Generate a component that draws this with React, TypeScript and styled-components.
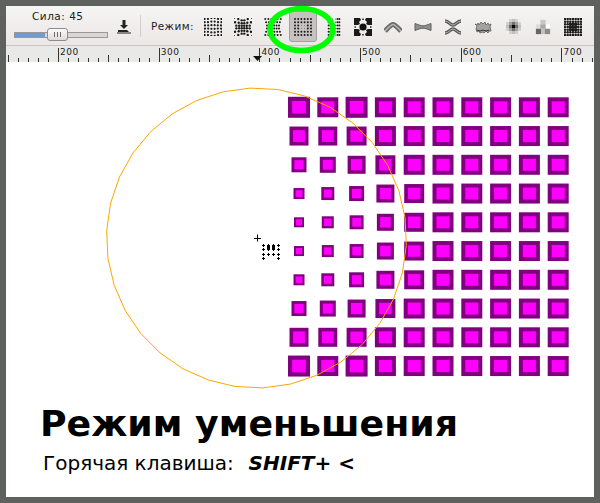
import React from 'react'
import styled, { createGlobalStyle } from 'styled-components'

const GlobalStyle = createGlobalStyle`
  html, body {
    margin: 0;
    padding: 0;
    background: #5f615e;
  }
`

const Frame = styled.div`
  position: relative;
  box-sizing: border-box;
  width: 600px;
  height: 503px;
  padding: 6px;
  background: #5f615e;
  overflow: hidden;
  font-family: 'DejaVu Sans', sans-serif;
`

const Toolbar = styled.div`
  display: flex;
  align-items: center;
  box-sizing: border-box;
  height: 40px;
  padding-left: 8px;
  background: linear-gradient(#f5f5f3, #ebe7e5);
  border-bottom: 1px solid #c9c3c2;
`

const SliderBlock = styled.div`
  display: flex;
  flex-direction: column;
  align-items: flex-start;
  width: 94px;
  gap: 10px;
  padding-bottom: 3px;
`

const SliderLabel = styled.span`
  margin-left: 18px;
  font-size: 10.5px;
  line-height: 12px;
  letter-spacing: 0.5px;
  color: #222;
`

const Track = styled.div`
  position: relative;
  box-sizing: border-box;
  width: 94px;
  height: 6px;
  background: #dcd6d5;
  border: 1px solid #9a9896;
`

const TrackFill = styled.div`
  height: 100%;
  background: #6b9cd6;
`

const Thumb = styled.div`
  position: absolute;
  top: -5px;
  box-sizing: border-box;
  display: flex;
  align-items: center;
  justify-content: center;
  gap: 2px;
  width: 21px;
  height: 13px;
  background: linear-gradient(#fbfbfa, #dedbd9);
  border: 1px solid #8f8d8b;
  border-radius: 3px;
`

const Grip = styled.i`
  width: 1px;
  height: 5px;
  background: #6e6c6a;
`

const SaveButton = styled.div`
  display: flex;
  justify-content: center;
  width: 32px;
  padding-top: 2px;
`

const Separator = styled.div`
  width: 1px;
  height: 22px;
  background: #d2d0ce;
`

const ModeLabel = styled.span`
  margin-left: 10px;
  width: 47px;
  font-size: 10.5px;
  letter-spacing: 0.4px;
  color: #222;
`

const ModeRow = styled.div`
  display: flex;
  align-items: center;
`

const ModeButton = styled.div<{ $active?: boolean }>`
  box-sizing: border-box;
  display: flex;
  align-items: center;
  justify-content: center;
  width: 28px;
  height: 31px;
  margin: 0 1px;
  border-radius: 3px;
  background: ${p => (p.$active ? '#c6c2c0' : 'transparent')};
  border: 1px solid ${p => (p.$active ? '#a3a19f' : 'transparent')};
  transform: translateY(1px);
`

const Highlight = styled.svg`
  position: absolute;
  left: 262px;
  top: 0;
  width: 80px;
  height: 60px;
`

const RulerBar = styled.svg`
  display: block;
  width: 588px;
  height: 16px;
  background: #e9e9e7;
`

const Canvas = styled.div`
  display: flex;
  flex-direction: column;
  height: 435px;
  background: #fff;
`

const Drawing = styled.svg`
  display: block;
  width: 588px;
  height: 340px;
`

const Caption = styled.div`
  display: flex;
  flex-direction: column;
  padding-left: 34px;
`

const Title = styled.div`
  font-size: 36.3px;
  line-height: 44px;
  font-weight: 700;
  color: #000;
`

const Hotkey = styled.div`
  margin: 5px 0 0 3px;
  font-size: 20px;
  line-height: 24px;
  color: #000;
  white-space: pre;
`

const Key = styled.b`
  margin-left: 2px;
  font-style: italic;
`

type Dot = [number, number, number?]

const range = (n: number) => Array.from({ length: n }, (_, i) => i)

function gridDots(n: number, move: (x: number, y: number) => Dot): Dot[] {
  const out: Dot[] = []
  const step = 16 / (n - 1)
  range(n).forEach(r =>
    range(n).forEach(c => {
      out.push(move(1 + c * step - 9, 1 + r * step - 9))
    })
  )
  return out
}

const DOT_ICONS: Record<string, Dot[]> = {
  scatter: gridDots(6, (x, y) => [
    x + 9 + (Math.abs(y) < 2 ? 0 : x * 0.05),
    y + 9 + (Math.abs(x) < 3 ? y * 0.12 : 0),
    1.1,
  ]),
  pinch: gridDots(6, (x, y) => {
    const k = 0.75 + Math.abs(x * y) / 160
    return [x * k + 9, y * k + 9, 1.2]
  }),
  left: gridDots(6, (x, y) => [
    x * (0.7 + Math.abs(y) / 30) + 9,
    y + 9,
    1,
  ]),
  shrink: gridDots(6, (x, y) => {
    const inner = Math.abs(x) < 4 && Math.abs(y) < 4
    return [x + 9, y + 9, inner ? 0.4 : 1]
  }),
  columns: gridDots(6, (x, y) => [
    x * 0.55 + 9 + (x > 0 ? 2 : 0),
    y + 9,
    x > -2 && x < 2 ? 0.6 : 0.95,
  ]),
  dense: gridDots(7, (x, y) => [
    x + 9,
    y + 9,
    1.25 + (Math.abs(x) < 4 && Math.abs(y) < 4 ? 0.5 : 0),
  ]),
}

function DotIcon({ name }: { name: string }) {
  return (
    <svg width="18" height="18" viewBox="0 0 18 18">
      {DOT_ICONS[name].map(([x, y, r], i) => (
        <circle key={i} cx={x} cy={y} r={r} fill="#1c1c1c" />
      ))}
    </svg>
  )
}

function BlobIcon() {
  return (
    <svg width="18" height="18" viewBox="0 0 18 18">
      <circle cx="9" cy="9" r="3.6" fill="#111" />
      <path d="M0 0h6l1 2-2 2 1 2-2 1H0zM18 0h-6l-1 2 2 2-1 2 2 1h4zM0 18h6l1-2-2-2 1-2-2-1H0zM18 18h-6l-1-2 2-2-1-2 2-1h4z" fill="#1a1a1a" />
      <path d="M8 0.500h2v1.500H8zM8 16h2v1.500H8zM0.500 8H2v2H0.500zM16 8h1.500v2H16z" fill="#555" />
    </svg>
  )
}

function ArchIcon() {
  return (
    <svg width="18" height="18" viewBox="0 0 18 18">
      <path d="M1 13 C5 9 7 6.5 9 6.5 C11 6.5 13 9 17 13" fill="none" stroke="#6c6c6c" strokeWidth="5" />
      <path d="M1 13 C5 9 7 6.5 9 6.5 C11 6.5 13 9 17 13" fill="none" stroke="#b4b4b2" strokeWidth="1.6" />
    </svg>
  )
}

function BowIcon() {
  return (
    <svg width="18" height="18" viewBox="0 0 18 18">
      <path d="M1 5.500 C5 7 7 7.800 9 7.800 C11 7.800 13 7 17 5.500 V12.500 C13 11 11 10.200 9 10.200 C7 10.200 5 11 1 12.500 Z" fill="#8e8e8c" stroke="#5e5e5e" strokeWidth="1" />
    </svg>
  )
}

function CrossIcon() {
  return (
    <svg width="18" height="18" viewBox="0 0 18 18">
      <path d="M1 3 C5 3 6 7 9 7 C12 7 13 3 17 3" fill="none" stroke="#5c5c5c" strokeWidth="3.4" />
      <path d="M1 15 C5 15 6 11 9 11 C12 11 13 15 17 15" fill="none" stroke="#5c5c5c" strokeWidth="3.4" />
      <path d="M1 3 C5 3 6 7 9 7 C12 7 13 3 17 3M1 15 C5 15 6 11 9 11 C12 11 13 15 17 15" fill="none" stroke="#b0b0ae" strokeWidth="1" />
    </svg>
  )
}

function RoughIcon() {
  return (
    <svg width="18" height="18" viewBox="0 0 18 18">
      <path d="M1 6l2 1 1-2 1 2 2-3 2 2 2-2 1 3 2-2 1 2 2-1-1 3 1 4-2 0-1 2-2-2-2 2-2-1-2 1-1-2-2 1-1-3 1-3z" fill="#a2a2a0" stroke="#5a5a5a" strokeWidth="0.8" />
      <path d="M3 12l3 1 3-1 3 1 3-1" fill="none" stroke="#333" strokeWidth="1" />
    </svg>
  )
}

const BLUR_SHADES = [
  ['#efefee', '#d0d0ce', '#c0c0be', '#d0d0ce', '#efefee'],
  ['#d0d0ce', '#a2a2a0', '#707070', '#a2a2a0', '#d0d0ce'],
  ['#c0c0be', '#707070', '#0a0a0a', '#707070', '#c0c0be'],
  ['#d0d0ce', '#a2a2a0', '#707070', '#a2a2a0', '#d0d0ce'],
  ['#efefee', '#d0d0ce', '#c0c0be', '#d0d0ce', '#efefee'],
]

function BlurIcon() {
  return (
    <svg width="15" height="15" viewBox="0 0 15 15">
      {BLUR_SHADES.map((row, r) =>
        row.map((fill, c) => (
          <rect key={`${r}-${c}`} x={c * 3} y={r * 3} width="3" height="3" fill={fill} />
        ))
      )}
    </svg>
  )
}

function PixelIcon() {
  return (
    <svg width="16" height="16" viewBox="0 0 18 18">
      <rect x="6" y="1" width="6" height="5" fill="#c8c8c6" />
      <rect x="12" y="6" width="5" height="5" fill="#fff" />
      <rect x="1" y="6" width="5" height="5" fill="#dcdcda" />
      <rect x="6" y="6" width="6" height="5" fill="#a8a8a6" />
      <rect x="1" y="11" width="6" height="6" fill="#666" />
      <rect x="7" y="11" width="4" height="6" fill="#c0c0be" />
      <rect x="11" y="11" width="6" height="6" fill="#8c8c8a" />
    </svg>
  )
}

const MODES: React.ReactNode[] = [
  <DotIcon name="scatter" />,
  <DotIcon name="pinch" />,
  <DotIcon name="left" />,
  <DotIcon name="shrink" />,
  <DotIcon name="columns" />,
  <BlobIcon />,
  <ArchIcon />,
  <BowIcon />,
  <CrossIcon />,
  <RoughIcon />,
  <BlurIcon />,
  <PixelIcon />,
  <DotIcon name="dense" />,
]

// x offset inside the ruler, tick every 10.07px with the label on each hundred
function Ruler() {
  const ticks = range(59).map(i => {
    const x = 2.1 + i * 10.07 - 0.5
    const major = (i - 5) % 10 === 0
    const mid = (i - 5) % 5 === 0
    return { x: Math.round(x) + 0.5, major, mid }
  })
  return (
    <RulerBar viewBox="0 0 588 16">
      {ticks.map((t, i) => (
        <line
          key={i}
          x1={t.x}
          x2={t.x}
          y1={t.major ? 2 : t.mid ? 9 : 12}
          y2="16"
          stroke="#333"
          strokeWidth="1"
        />
      ))}
      {[200, 300, 400, 500, 600, 700].map((n, i) => (
        <text
          key={n}
          x={54 + i * 100.7}
          y="9"
          fontSize="9"
          letterSpacing="0.5"
          fill="#222"
          fontFamily="'DejaVu Sans', sans-serif"
        >
          {n}
        </text>
      ))}
      <path d="M247 10h9l-4.500 5z" fill="#111" />
    </RulerBar>
  )
}

// outer size of each square for the five left columns, upper half of the grid
const SIZES = [
  [22, 21, 22, 21, 21],
  [19, 19, 20, 21, 21],
  [15, 16, 18, 20, 21],
  [11, 13, 15, 18, 20],
  [10, 12, 14, 17, 20],
]

function Squares() {
  const rects: React.ReactNode[] = []
  range(10).forEach(r => {
    range(10).forEach(c => {
      const row = r < 5 ? r : 9 - r
      const w = c < 5 ? SIZES[row][c] : 21
      const h = w > 19 ? w - 1 : w
      const sw = w * 0.19
      const cx = 299 + c * 28.8
      const cy = 107.3 + r * 28.75
      rects.push(
        <rect
          key={`${r}-${c}`}
          x={cx - w / 2 + sw / 2}
          y={cy - h / 2 + sw / 2}
          width={w - sw}
          height={h - sw}
          fill="#ff00ff"
          stroke="#800080"
          strokeWidth={sw}
        />
      )
    })
  })
  return <>{rects}</>
}

function BrushCircle() {
  const pts = range(34)
    .map(i => {
      const a = (i / 34) * Math.PI * 2 + 0.05
      return `${(256.5 + 150 * Math.cos(a)).toFixed(1)},${(238 + 150 * Math.sin(a)).toFixed(1)}`
    })
    .join(' ')
  return <polygon points={pts} fill="none" stroke="#ffa500" strokeWidth="1" />
}

const Plus = ({ x, y }: { x: number; y: number }) => (
  <path d={`M${x - 1.5} ${y}h3M${x} ${y - 1.5}v3`} stroke="#000" strokeWidth="1" fill="none" />
)

function BrushCursor() {
  const dots: [number, number][] = [
    [263.5, 245.5], [268.5, 245.5], [273.5, 245.5], [278.5, 245.5],
    [263.5, 249.5], [268.5, 249.5], [273.5, 249.5], [278.5, 249.5],
    [263.5, 254.5], [268.5, 254.5], [273.5, 254.5], [278.5, 254.5],
    [263.5, 258.5], [278.5, 258.5],
  ]
  return (
    <>
      <path d="M257.500 234.500v7M254 238.500h7" stroke="#000" strokeWidth="1" fill="none" />
      {dots.map(([x, y]) => (
        <Plus key={`${x}-${y}`} x={x} y={y} />
      ))}
      <rect x="267" y="245" width="3" height="4" fill="#000" />
      <rect x="272" y="245" width="3" height="4" fill="#000" />
    </>
  )
}

export default function App() {
  return (
    <Frame>
      <GlobalStyle />
      <Toolbar>
        <SliderBlock>
          <SliderLabel>Сила: 45</SliderLabel>
          <Track>
            <TrackFill style={{ width: `${45 * 0.73}%` }} />
            <Thumb style={{ left: 32 }}>
              <Grip />
              <Grip />
              <Grip />
            </Thumb>
          </Track>
        </SliderBlock>
        <SaveButton>
          <svg width="14" height="14" viewBox="0 0 14 14">
            <path d="M5.500 0h3v5h2.500l-4 4-4-4h2.500z" fill="#222" />
            <path d="M1 10h9l2 2h-11z" fill="#222" />
            <path d="M0 13h14" stroke="#222" strokeWidth="1" />
          </svg>
        </SaveButton>
        <Separator />
        <ModeLabel>Режим:</ModeLabel>
        <ModeRow>
          {MODES.map((icon, i) => (
            <ModeButton key={i} $active={i === 3}>
              {icon}
            </ModeButton>
          ))}
        </ModeRow>
      </Toolbar>
      <Ruler />
      <Canvas>
        <Drawing viewBox="6 62 588 340">
          <Squares />
          <BrushCircle />
          <BrushCursor />
        </Drawing>
        <Caption>
          <Title>Режим уменьшения</Title>
          <Hotkey>
            Горячая клавиша:  <Key>SHIFT+ &lt;</Key>
          </Hotkey>
        </Caption>
      </Canvas>
      <Highlight viewBox="262 0 80 60">
        <ellipse cx="301.500" cy="29.500" rx="31.500" ry="21" fill="none" stroke="#00ff00" strokeWidth="5.500" />
      </Highlight>
    </Frame>
  )
}
